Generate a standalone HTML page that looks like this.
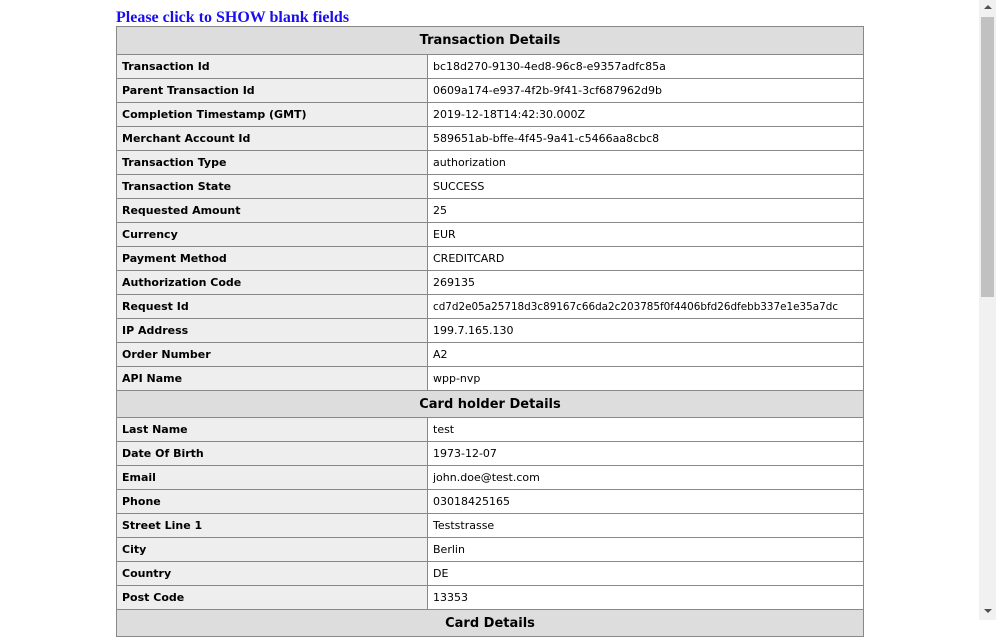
<!DOCTYPE html>
<html><head><style>
body{margin:0;background:#fff;width:996px;height:620px;overflow:hidden;position:relative}
.t{position:absolute;left:116px;top:9px;font:bold 16px "Liberation Serif",serif;color:#1a0dee}
table{position:absolute;left:116px;top:26px;width:748px;border-collapse:collapse;border:1px solid #333;font-family:"DejaVu Sans",sans-serif;font-size:11px}
td{border:1px solid #888;height:24px;padding:0 5px;box-sizing:border-box;color:#000;white-space:nowrap}
td.l{width:311px;background:#eee;font-weight:bold}
td.h{background:#ddd;text-align:center;font-weight:bold;font-size:13px;height:27px}
td.h1{height:28px}
.sb{position:absolute;left:979px;top:0;width:17px;height:620px;background:#f1f1f1}
.th{position:absolute;left:981px;top:17px;width:13px;height:280px;background:#c1c1c1}
.up{position:absolute;left:984px;top:5px;border:4px solid transparent;border-top:0;border-bottom:4px solid #505050}
.dn{position:absolute;left:984px;top:609px;border:4px solid transparent;border-bottom:0;border-top:4px solid #505050}
</style></head><body>
<div class="t">Please click to SHOW blank fields</div>
<table>
<tr><td class="h h1" colspan="2">Transaction Details</td></tr>
<tr><td class="l">Transaction Id</td><td>bc18d270-9130-4ed8-96c8-e9357adfc85a</td></tr>
<tr><td class="l">Parent Transaction Id</td><td>0609a174-e937-4f2b-9f41-3cf687962d9b</td></tr>
<tr><td class="l">Completion Timestamp (GMT)</td><td>2019-12-18T14:42:30.000Z</td></tr>
<tr><td class="l">Merchant Account Id</td><td>589651ab-bffe-4f45-9a41-c5466aa8cbc8</td></tr>
<tr><td class="l">Transaction Type</td><td>authorization</td></tr>
<tr><td class="l">Transaction State</td><td>SUCCESS</td></tr>
<tr><td class="l">Requested Amount</td><td>25</td></tr>
<tr><td class="l">Currency</td><td>EUR</td></tr>
<tr><td class="l">Payment Method</td><td>CREDITCARD</td></tr>
<tr><td class="l">Authorization Code</td><td>269135</td></tr>
<tr><td class="l">Request Id</td><td style="font-size:10.4px">cd7d2e05a25718d3c89167c66da2c203785f0f4406bfd26dfebb337e1e35a7dc</td></tr>
<tr><td class="l">IP Address</td><td>199.7.165.130</td></tr>
<tr><td class="l">Order Number</td><td>A2</td></tr>
<tr><td class="l">API Name</td><td>wpp-nvp</td></tr>
<tr><td class="h" colspan="2">Card holder Details</td></tr>
<tr><td class="l">Last Name</td><td>test</td></tr>
<tr><td class="l">Date Of Birth</td><td>1973-12-07</td></tr>
<tr><td class="l">Email</td><td>john.doe@test.com</td></tr>
<tr><td class="l">Phone</td><td>03018425165</td></tr>
<tr><td class="l">Street Line 1</td><td>Teststrasse</td></tr>
<tr><td class="l">City</td><td>Berlin</td></tr>
<tr><td class="l">Country</td><td>DE</td></tr>
<tr><td class="l">Post Code</td><td>13353</td></tr>
<tr><td class="h" colspan="2">Card Details</td></tr>
</table>
<div class="sb"></div><div class="th"></div><div class="up"></div><div class="dn"></div>
</body></html>
